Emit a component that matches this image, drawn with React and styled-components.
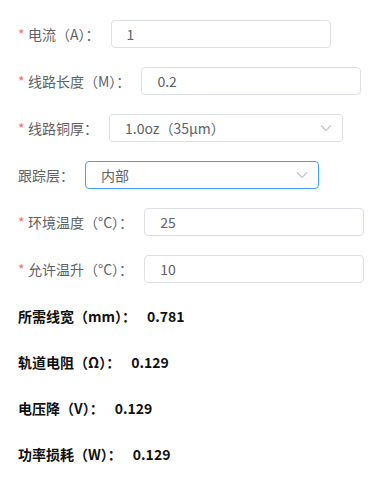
import React from 'react';
import styled, { createGlobalStyle } from 'styled-components';

const GlobalStyle = createGlobalStyle`
  html, body {
    margin: 0;
    padding: 0;
    background: #ffffff;
  }
  body {
    font-family: "Noto Sans CJK SC", "Noto Sans", sans-serif;
  }
`;

const Page = styled.div`
  padding: 20px 18px 0 18px;
`;

const FormItem = styled.div`
  display: flex;
  align-items: center;
  height: 28px;
  margin-bottom: 19px;
`;

const Label = styled.label`
  display: flex;
  align-items: center;
  font-size: 14px;
  color: #606266;
  padding-right: 11px;
  white-space: nowrap;
  line-height: 28px;
`;

const Star = styled.span`
  color: #f56c6c;
  font-size: 14px;
  width: 10px;
`;

const Input = styled.input`
  box-sizing: border-box;
  width: ${p => p.$w || 220}px;
  height: 28px;
  padding: 0 15px;
  border: 1px solid #dcdfe6;
  border-radius: 4px;
  font-family: "Noto Sans CJK SC", "Noto Sans", sans-serif;
  font-size: 14px;
  color: #606266;
  outline: none;
  background: #fff;
`;

const Select = styled.div`
  box-sizing: border-box;
  width: ${p => p.$w || 234}px;
  height: 28px;
  padding: 0 10px 0 15px;
  border: 1px solid ${p => (p.$focus ? '#409eff' : '#dcdfe6')};
  border-radius: 4px;
  display: flex;
  align-items: center;
  justify-content: space-between;
  font-size: 14px;
  color: #606266;
  background: #fff;
`;

const Result = styled.div`
  display: flex;
  align-items: center;
  height: 28px;
  margin-bottom: 18px;
  font-size: 14px;
  font-weight: 700;
  color: #111;
  white-space: nowrap;
`;

const Value = styled.span`
  margin-left: 11px;
`;

const Chevron = () => (
  <svg width="12" height="8" viewBox="0 0 12 8">
    <path d="M1 1.5 L6 6.5 L11 1.5" fill="none" stroke="#c0c4cc" strokeWidth="1.2" />
  </svg>
);

const fields = [
  { label: '电流（A）：', value: '1', required: true },
  { label: '线路长度（M）：', value: '0.2', required: true },
];

const fields2 = [
  { label: '环境温度（°C）：', value: '25', required: true },
  { label: '允许温升（°C）：', value: '10', required: true },
];

const results = [
  { label: '所需线宽（mm）：', value: '0.781' },
  { label: '轨道电阻（Ω）：', value: '0.129' },
  { label: '电压降（V）：', value: '0.129' },
  { label: '功率损耗（W）：', value: '0.129' },
];

function Field({ label, value, required }) {
  return (
    <FormItem>
      <Label>
        {required && <Star>*</Star>}
        {label}
      </Label>
      <Input defaultValue={value} />
    </FormItem>
  );
}

export default function App() {
  return (
    <Page>
      <GlobalStyle />
      {fields.map(f => (
        <Field key={f.label} {...f} />
      ))}
      <FormItem>
        <Label>
          <Star>*</Star>
          线路铜厚：
        </Label>
        <Select>
          <span>1.0oz（35μm）</span>
          <Chevron />
        </Select>
      </FormItem>
      <FormItem>
        <Label>跟踪层：</Label>
        <Select $focus>
          <span>内部</span>
          <Chevron />
        </Select>
      </FormItem>
      {fields2.map(f => (
        <Field key={f.label} {...f} />
      ))}
      {results.map(r => (
        <Result key={r.label}>
          {r.label}
          <Value>{r.value}</Value>
        </Result>
      ))}
    </Page>
  );
}
